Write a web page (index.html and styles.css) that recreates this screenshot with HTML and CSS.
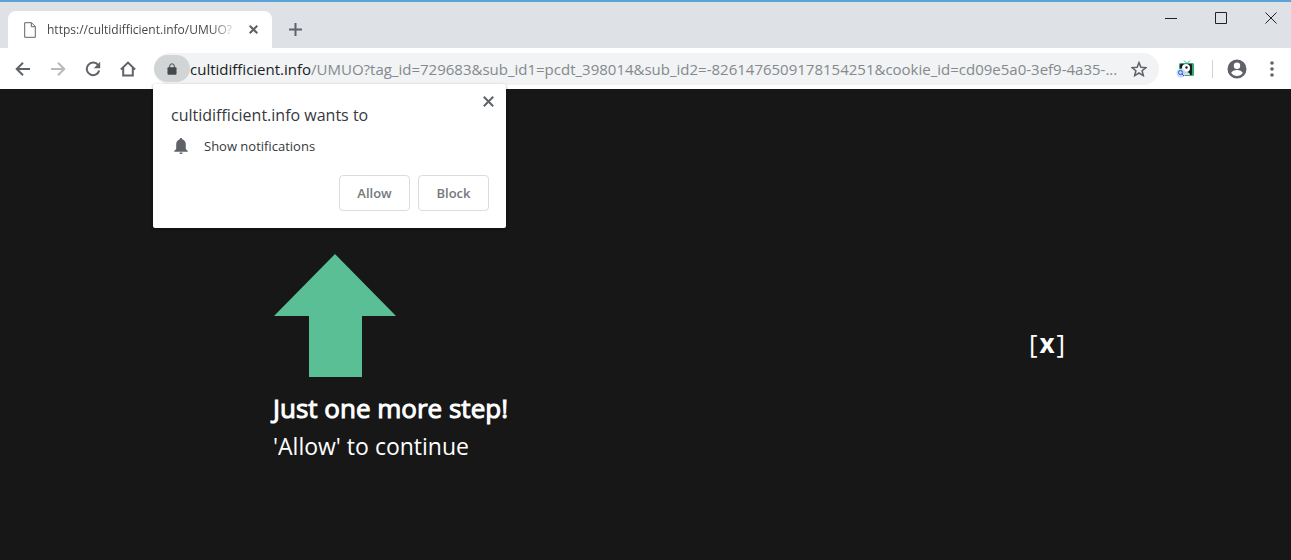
FILE: index.html
```html
<!DOCTYPE html>
<html lang="en">

<head>
    <meta charset="UTF-8">
    <meta name="viewport" content="width=device-width, initial-scale=1.0">
    <title>Just one more step!</title>
    <link rel="stylesheet" href="styles.css">
</head>

<body>
    <header class="browser">
        <div class="tab-strip">
            <div class="tab">
                <svg class="page-icon" width="12" height="16" viewBox="0 0 12 16">
                    <path d="M.7.7h6.8l3.8 3.8v10.8H.7zM7.3.7v4h4" />
                </svg>
                <span class="tab-title">https://cultidifficient.info/UMUO?</span>
                <button class="icon-button tab-close" aria-label="Close tab">
                    <svg width="9" height="9" viewBox="0 0 9 9">
                        <path d="M.7.7l7.6 7.6M8.3.7L.7 8.3" />
                    </svg>
                </button>
            </div>
            <button class="icon-button new-tab" aria-label="New tab">
                <svg width="13" height="13" viewBox="0 0 13 13">
                    <path d="M6.5 0v13M0 6.5h13" />
                </svg>
            </button>
            <div class="window-controls">
                <button class="icon-button" aria-label="Minimize">
                    <svg width="12" height="12" viewBox="0 0 12 12">
                        <path d="M0 6.5h12" />
                    </svg>
                </button>
                <button class="icon-button" aria-label="Maximize">
                    <svg width="12" height="12" viewBox="0 0 12 12">
                        <path d="M.5.5h11v11H.5z" />
                    </svg>
                </button>
                <button class="icon-button" aria-label="Close">
                    <svg width="12" height="12" viewBox="0 0 12 12">
                        <path d="M.5.5l11 11M11.5.5l-11 11" />
                    </svg>
                </button>
            </div>
        </div>

        <div class="toolbar">
            <nav class="nav-buttons">
                <button class="icon-button" aria-label="Back">
                    <svg width="16" height="16" viewBox="0 0 16 16">
                        <path d="M15 8H2M8 1.7L1.7 8 8 14.3" />
                    </svg>
                </button>
                <button class="icon-button forward" aria-label="Forward">
                    <svg width="16" height="16" viewBox="0 0 16 16">
                        <path d="M1 8h13M8 1.7L14.3 8 8 14.3" />
                    </svg>
                </button>
                <button class="icon-button" aria-label="Reload">
                    <svg width="16" height="16" viewBox="0 0 16 16">
                        <path d="M13.2 4.2A6.3 6.3 0 1 0 14.2 9.5" />
                        <path class="solid" d="M15.2.8v6.4H8.8z" />
                    </svg>
                </button>
                <button class="icon-button" aria-label="Home">
                    <svg width="16" height="16" viewBox="0 0 16 16">
                        <path d="M.9 8.5L8 1.6l7.1 6.9M3.2 7v7.4h9.6V7" />
                    </svg>
                </button>
            </nav>

            <div class="address-bar">
                <button class="icon-button lock" aria-label="View site information">
                    <svg width="10" height="12" viewBox="0 0 10 12">
                        <rect class="solid" x=".5" y="4.2" width="9" height="7.6" rx="1" />
                        <path d="M2.7 5V3.1a2.3 2.3 0 0 1 4.6 0V5" />
                    </svg>
                </button>
                <div class="url" role="textbox" contenteditable="true" spellcheck="false" aria-label="Address"><span class="host">cultidifficient.info</span>/UMUO?tag_id=729683&amp;sub_id1=pcdt_398014&amp;sub_id2=-8261476509178154251&amp;cookie_id=cd09e5a0-3ef9-4a35-...</div>
                <button class="icon-button star" aria-label="Bookmark this page">
                    <svg width="16" height="16" viewBox="0 0 16 16">
                        <path d="M8 1.6l1.9 4.6 5 .4-3.8 3.2 1.2 4.8L8 12l-4.3 2.6 1.2-4.8L1.1 6.6l5-.4z" />
                    </svg>
                </button>
            </div>

            <button class="icon-button" aria-label="Extension">
                <svg class="extension" width="20" height="18" viewBox="0 0 20 18">
                    <path d="M8 .5l3 3 3-3" stroke="#3fae83" />
                    <rect x="3" y="3" width="15" height="13" rx="1.5" fill="#38a67c" />
                    <rect x="4" y="4" width="12" height="11" rx="1" fill="#15201d" />
                    <circle cx="10" cy="8" r="4" fill="#fff" />
                    <circle cx="10.5" cy="7.5" r="1.2" fill="#15201d" />
                    <path d="M7 15c0-4 7-4 7 0z" fill="#d9e2e0" />
                    <circle cx="5" cy="13" r="4.5" fill="#c3d8fa" />
                    <circle cx="4.5" cy="12.5" r="2" stroke="#2b57b8" />
                    <path d="M6 14l2 2" stroke="#2b57b8" />
                </svg>
            </button>
            <span class="divider"></span>
            <button class="icon-button profile" aria-label="Profile">
                <svg width="20" height="20" viewBox="0 0 20 20">
                    <path class="solid" fill-rule="evenodd" d="M10 .5a9.5 9.5 0 1 0 0 19 9.5 9.5 0 0 0 0-19zM10 3.6a3.2 3.2 0 1 1 0 6.4 3.2 3.2 0 0 1 0-6.4zM4.3 14c.2-2 3.8-3 5.7-3s5.5 1 5.7 3a6.8 6.8 0 0 1-11.4 0z" />
                </svg>
            </button>
            <button class="icon-button menu" aria-label="Menu">
                <svg width="4" height="16" viewBox="0 0 4 16">
                    <circle class="solid" cx="2" cy="2" r="1.8" />
                    <circle class="solid" cx="2" cy="8" r="1.8" />
                    <circle class="solid" cx="2" cy="14" r="1.8" />
                </svg>
            </button>
        </div>

        <div class="prompt" role="dialog" aria-labelledby="promptTitle">
            <button class="icon-button prompt-close" aria-label="Close">
                <svg width="11" height="11" viewBox="0 0 11 11">
                    <path d="M.8.8l9.4 9.4M10.2.8L.8 10.2" />
                </svg>
            </button>
            <h2 id="promptTitle">cultidifficient.info wants to</h2>
            <div class="permission">
                <svg width="14" height="16" viewBox="0 0 14 16">
                    <path class="solid" d="M7 0c.8 0 1.2.5 1.2 1.3C10.6 2 11.8 4 11.8 6.3V11l2 2v.8H.2V13l2-2V6.3C2.2 4 3.4 2 5.8 1.3 5.8.5 6.2 0 7 0zM5.4 14.5h3.2c0 2-3.2 2-3.2 0z" />
                </svg>
                <span>Show notifications</span>
            </div>
            <div class="prompt-actions">
                <button class="button">Allow</button>
                <button class="button">Block</button>
            </div>
        </div>
    </header>

    <main class="content">
        <div class="step">
            <svg class="arrow" width="124" height="124" viewBox="0 0 124 124">
                <path d="M62 0l61 62H89v61H36V62H1z" />
            </svg>
            <h1>Just one more step!</h1>
            <p>'Allow' to continue</p>
        </div>
        <button class="dismiss" aria-label="Dismiss"><span>[</span><b>x</b><span>]</span></button>
    </main>
</body>

</html>
```
FILE: styles.css
```css
* {
    box-sizing: border-box;
}

body {
    margin: 0;
    min-height: 100vh;
    display: flex;
    flex-direction: column;
    font-family: "Open Sans", "Noto Sans", sans-serif;
    background-color: #171717;
}

button {
    font-family: inherit;
    cursor: pointer;
}

svg {
    display: block;
    fill: none;
    stroke: currentColor;
}

.solid {
    fill: currentColor;
    stroke: none;
}

.icon-button {
    display: flex;
    align-items: center;
    justify-content: center;
    flex-shrink: 0;
    padding: 0;
    border: none;
    background: none;
    color: #5f6368;
}

/* Browser window */
.browser {
    position: relative;
    border-top: 2px solid #5ba3d6;
    background-color: #dee1e6;
}

.tab-strip {
    display: flex;
    height: 46px;
    padding-left: 8px;
}

.tab {
    display: flex;
    align-items: center;
    width: 264px;
    margin-top: 9px;
    padding: 0 14px 0 16px;
    border-radius: 8px 8px 0 0;
    background-color: #fff;
}

.page-icon {
    flex-shrink: 0;
    color: #5f6368;
}

.tab-title {
    flex: 1;
    margin-left: 11px;
    overflow: hidden;
    white-space: nowrap;
    font-size: 12px;
    color: #45494d;
    -webkit-mask-image: linear-gradient(to left, transparent, #000 28px);
    mask-image: linear-gradient(to left, transparent, #000 28px);
}

.tab-close {
    margin-left: 11px;
}

.tab-close svg,
.prompt-close svg,
.nav-buttons svg {
    stroke-width: 2;
}

.new-tab {
    width: 28px;
    margin: 9px 0 0 9px;
}

.new-tab svg {
    stroke-width: 2;
}

.window-controls {
    display: flex;
    height: 32px;
    margin-left: auto;
}

.window-controls .icon-button {
    width: 50px;
    color: #222;
}

.window-controls .icon-button:last-child {
    width: 40px;
    margin-left: 5px;
}

.toolbar {
    display: flex;
    align-items: center;
    height: 41px;
    padding: 0 6px 0 15px;
    background-color: #fff;
}

.nav-buttons {
    display: flex;
    gap: 19px;
    margin-right: 18px;
}

.forward {
    color: #b8babd;
}

.address-bar {
    display: flex;
    align-items: center;
    flex: 1;
    min-width: 0;
    height: 32px;
    padding-right: 12px;
    border-radius: 16px;
    background-color: #f1f3f4;
}

.lock {
    width: 36px;
    height: 27px;
    border-radius: 14px;
    background-color: #d2d5d6;
    color: #46494c;
}

.url {
    flex: 1;
    min-width: 0;
    overflow: hidden;
    white-space: nowrap;
    font-size: 15px;
    color: #85898d;
}

.host {
    color: #202124;
}

.star {
    margin-left: 12px;
}

.star svg {
    stroke-width: 1.5;
}

.address-bar + .icon-button {
    margin-left: 17px;
}

.extension {
    stroke: none;
}

.divider {
    width: 1px;
    height: 18px;
    margin: 0 14px 0 16px;
    background-color: #d0d2d5;
}

.menu {
    width: 26px;
    margin-left: 12px;
}

/* Permission prompt */
.prompt {
    position: absolute;
    top: 82px;
    left: 153px;
    width: 353px;
    padding: 20px 17px 17px 18px;
    border-radius: 2px;
    background-color: #fff;
    box-shadow: 0 1px 3px rgba(0, 0, 0, 0.4);
    color: #36393d;
}

.prompt-close {
    position: absolute;
    top: 12px;
    right: 12px;
}

.prompt h2 {
    margin: 0;
    font-size: 16px;
    line-height: 22px;
    font-weight: normal;
}

.permission {
    display: flex;
    align-items: center;
    gap: 16px;
    margin-top: 10px;
    padding-left: 3px;
    font-size: 13px;
    line-height: 20px;
}

.permission svg {
    color: #5f6368;
}

.prompt-actions {
    display: flex;
    justify-content: flex-end;
    gap: 8px;
    margin-top: 19px;
}

.button {
    width: 71px;
    height: 36px;
    padding: 0;
    border: 1px solid #dadce0;
    border-radius: 4px;
    background-color: #fff;
    font-size: 13px;
    font-weight: 600;
    color: #75787b;
}

.button:hover {
    background-color: #f8f9fa;
}

/* Page */
.content {
    display: flex;
    justify-content: space-between;
    align-items: center;
    flex: 1;
    padding: 36px 226px 0 273px;
    color: #fff;
}

.step {
    align-self: flex-start;
    margin-top: 129px;
}

.arrow {
    fill: #5abf95;
    stroke: none;
}

.step h1 {
    margin: 12px 0 0;
    font-size: 26px;
    line-height: 36px;
    font-weight: 400;
    -webkit-text-stroke: 1px #fff;
}

.step p {
    margin: 4px 0 0;
    font-size: 23px;
    line-height: 32px;
}

.dismiss {
    display: flex;
    gap: 2px;
    padding: 0;
    border: none;
    background: none;
    font-size: 26px;
    color: #fff;
}
```
